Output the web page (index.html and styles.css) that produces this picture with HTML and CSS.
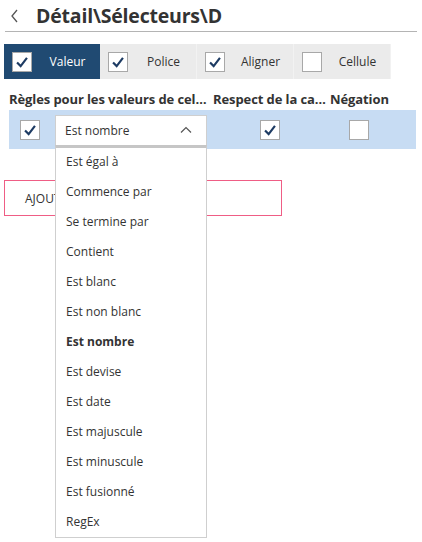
FILE: index.html
```html
<!DOCTYPE html>
<html lang="fr">
<head>
  <meta charset="UTF-8" />
  <meta name="viewport" content="width=device-width, initial-scale=1.0" />
  <title>Détail\Sélecteurs\D</title>
  <link rel="stylesheet" href="styles.css">
</head>
<body>
  <div class="header">
    <svg class="back" width="10" height="14" viewBox="0 0 10 14"><path d="M7 1 L2 7 L7 13" fill="none" stroke="#555" stroke-width="1.3"/></svg>
    <h1>Détail\Sélecteurs\D</h1>
  </div>

  <div class="tabs">
    <div class="tab active">
      <span class="check on"><svg viewBox="0 0 20 20"><path d="M4.5 10.5 L8.5 14.5 L15.5 5.5" /></svg></span>
      <span class="tab-label">Valeur</span>
    </div>
    <div class="tab">
      <span class="check on"><svg viewBox="0 0 20 20"><path d="M4.5 10.5 L8.5 14.5 L15.5 5.5" /></svg></span>
      <span class="tab-label">Police</span>
    </div>
    <div class="tab">
      <span class="check on"><svg viewBox="0 0 20 20"><path d="M4.5 10.5 L8.5 14.5 L15.5 5.5" /></svg></span>
      <span class="tab-label">Aligner</span>
    </div>
    <div class="tab">
      <span class="check"></span>
      <span class="tab-label">Cellule</span>
    </div>
  </div>

  <div class="grid head">
    <div class="col-title">Règles pour les valeurs de cellule</div>
    <div class="col-title">Respect de la casse</div>
    <div class="col-title">Négation</div>
  </div>

  <div class="grid row">
    <div class="cell-main">
      <span class="check on"><svg viewBox="0 0 20 20"><path d="M4.5 10.5 L8.5 14.5 L15.5 5.5" /></svg></span>
      <div class="select">
        <span>Est nombre</span>
        <svg class="caret" width="12" height="8" viewBox="0 0 12 8"><path d="M1 6.5 L6 1.5 L11 6.5" fill="none" stroke="#555" stroke-width="1.2"/></svg>
        <ul class="options">
          <li>Est égal à</li>
          <li>Commence par</li>
          <li>Se termine par</li>
          <li>Contient</li>
          <li>Est blanc</li>
          <li>Est non blanc</li>
          <li class="selected">Est nombre</li>
          <li>Est devise</li>
          <li>Est date</li>
          <li>Est majuscule</li>
          <li>Est minuscule</li>
          <li>Est fusionné</li>
          <li>RegEx</li>
        </ul>
      </div>
    </div>
    <div class="cell-center">
      <span class="check on"><svg viewBox="0 0 20 20"><path d="M4.5 10.5 L8.5 14.5 L15.5 5.5" /></svg></span>
    </div>
    <div class="cell-neg">
      <span class="check"></span>
    </div>
  </div>

  <button class="add">AJOUTER UNE RÈGLE DE VALEUR</button>
</body>
</html>
```

FILE: styles.css
```css
html, body {
  min-height: 100vh;
}
body {
  font-family: "Open Sans", "Noto Sans", sans-serif;
  color: #333;
  background: #fff;
  margin: 0;
  padding: 0 4px;
  box-sizing: border-box;
}
.header {
  display: flex;
  align-items: center;
  height: 31px;
  margin-left: 1px;
  border-bottom: 1px solid #b4b4b4;
  margin-right: 1px;
}
.back {
  margin-left: 5px;
  margin-right: 16px;
}
h1 {
  font-size: 19.5px;
  font-weight: bold;
  margin: 0;
  letter-spacing: -0.2px;
  color: #333;
}
.tabs {
  display: flex;
  margin-top: 12px;
  width: 387px;
}
.tab {
  display: flex;
  align-items: center;
  width: 97px;
  height: 35px;
  background: #ebebeb;
  border-right: 1px solid #f2f2f2;
  box-sizing: border-box;
}
.tab.active {
  background: #204a72;
  color: #fff;
  border-right: none;
  width: 96px;
}
.tab .check {
  margin-left: 8px;
}
.tab-label {
  flex: 1;
  text-align: center;
  font-size: 12px;
  padding-left: 3px;
}
.check {
  display: inline-flex;
  width: 20px;
  height: 20px;
  background: #fff;
  border: 1px solid #a8a8a8;
  box-sizing: border-box;
}
.check svg {
  width: 18px;
  height: 18px;
}
.check path {
  fill: none;
  stroke: #1d3b63;
  stroke-width: 2.4;
}
.grid {
  display: grid;
  grid-template-columns: 200px 113px 1fr;
  column-gap: 4px;
  margin-left: 5px;
  margin-right: 2px;
}
.head {
  margin-top: 9px;
  height: 22px;
  align-items: center;
}
.col-title {
  font-size: 13px;
  font-weight: bold;
  white-space: nowrap;
  overflow: hidden;
  text-overflow: ellipsis;
  letter-spacing: -0.1px;
}
.row {
  background: #c7dcf3;
  height: 39px;
  align-items: center;
}
.cell-main {
  display: flex;
  align-items: center;
}
.cell-main .check {
  margin-left: 11px;
  margin-right: 15px;
}
.cell-center {
  display: flex;
  justify-content: center;
}
.cell-neg {
  display: flex;
  padding-left: 19px;
}
.select {
  position: relative;
  display: flex;
  align-items: center;
  justify-content: space-between;
  width: 152px;
  height: 31px;
  margin-top: 1px;
  background: #fff;
  border: 1px solid #cfcfcf;
  box-sizing: border-box;
  padding: 0 9px;
  font-size: 12px;
}
.caret {
  margin-right: 5px;
}
.options {
  position: absolute;
  top: 29px;
  left: -1px;
  width: 152px;
  box-sizing: border-box;
  margin: 0;
  padding: 0;
  list-style: none;
  background: #fff;
  border: 1px solid #cfcfcf;
  border-top: 3px solid #c6c6c6;
  z-index: 2;
}
.options li {
  height: 30px;
  line-height: 30px;
  padding-left: 10px;
  font-size: 12px;
}
.options li:first-child {
  margin-top: -1px;
}
.options li.selected {
  font-weight: bold;
}
.add {
  display: block;
  margin-top: 31px;
  width: 278px;
  height: 36px;
  background: #fff;
  border: 1px solid #ef5d85;
  text-align: left;
  padding-left: 20px;
  font-family: "Open Sans", "Noto Sans", sans-serif;
  font-size: 12px;
  color: #333;
}
```
